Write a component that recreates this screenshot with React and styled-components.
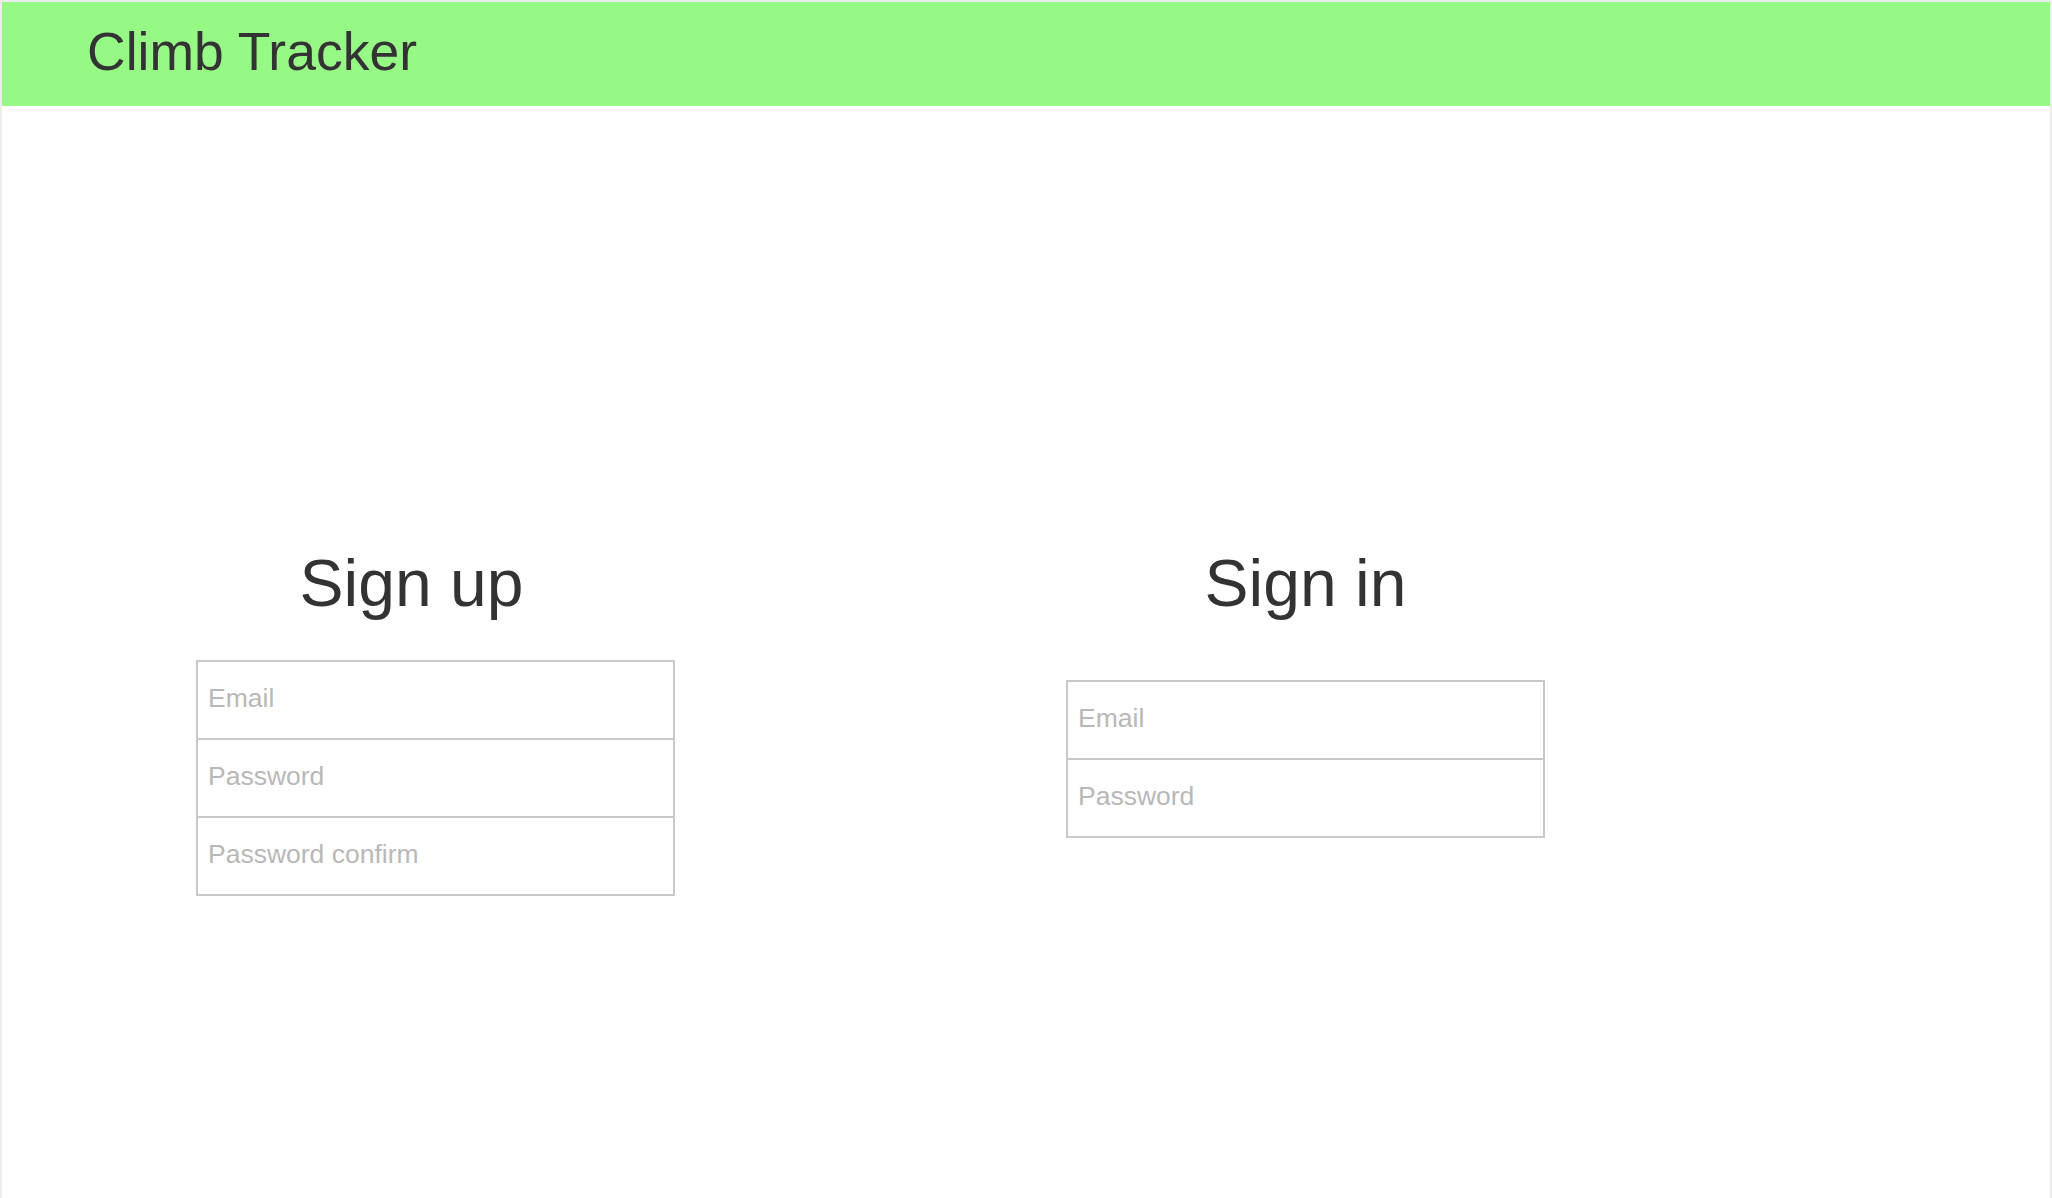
import styled, { createGlobalStyle } from "styled-components";

const GlobalStyle = createGlobalStyle`
  html, body {
    margin: 0;
    padding: 0;
    background: #ffffff;
  }
  body {
    font-family: "Liberation Sans", Arial, sans-serif;
    color: #333333;
  }
`;

const forms = [
  {
    title: "Sign up",
    fields: ["Email", "Password", "Password confirm"],
    titleShift: 48,
    formOffset: 0,
  },
  {
    title: "Sign in",
    fields: ["Email", "Password"],
    titleShift: 0,
    formOffset: 20,
  },
];

const App = () => {
  return (
    <Frame>
      <GlobalStyle />
      <Header>
        <Brand>Climb Tracker</Brand>
      </Header>

      <Main>
        {forms.map((f) => (
          <Column key={f.title}>
            <Title shift={f.titleShift}>{f.title}</Title>
            <Form offset={f.formOffset} onSubmit={(e) => e.preventDefault()}>
              {f.fields.map((field) => (
                <Input
                  key={field}
                  type={field.startsWith("Password") ? "password" : "email"}
                  placeholder={field}
                />
              ))}
            </Form>
          </Column>
        ))}
      </Main>
    </Frame>
  );
};

export default App;

const Frame = styled.div`
  min-height: 100vh;
  box-sizing: border-box;
  border: 2px solid #ececec;
  border-bottom: none;
  background: #ffffff;
`;

const Header = styled.header`
  height: 104px;
  box-sizing: border-box;
  padding: 19px 0 0 85px;
  background: #97f985;
`;

const Brand = styled.h1`
  margin: 0;
  font-size: 53.5px;
  line-height: 62px;
  font-weight: 400;
  color: #333333;
`;

const Main = styled.main`
  display: flex;
  align-items: flex-start;
  gap: 391px;
  padding: 439px 0 0 194px;
`;

const Column = styled.section`
  display: flex;
  flex-direction: column;
  align-items: center;
  width: 479px;
`;

const Title = styled.h2`
  margin: 0 ${({ shift }) => shift}px 39px 0;
  font-size: 66px;
  line-height: 76px;
  font-weight: 400;
  color: #333333;
`;

const Form = styled.form`
  display: flex;
  flex-direction: column;
  width: 100%;
  margin-top: ${({ offset }) => offset}px;
`;

const Input = styled.input`
  box-sizing: border-box;
  width: 100%;
  height: 80px;
  margin: 0;
  padding: 0 10px 4px;
  border: 2px solid #c8c8c8;
  border-radius: 0;
  outline: none;
  background: #ffffff;
  font-family: "Liberation Sans", Arial, sans-serif;
  font-size: 26.5px;
  color: #333333;

  & + & {
    margin-top: -2px;
  }

  &::placeholder {
    color: #b8b8b8;
  }
`;
